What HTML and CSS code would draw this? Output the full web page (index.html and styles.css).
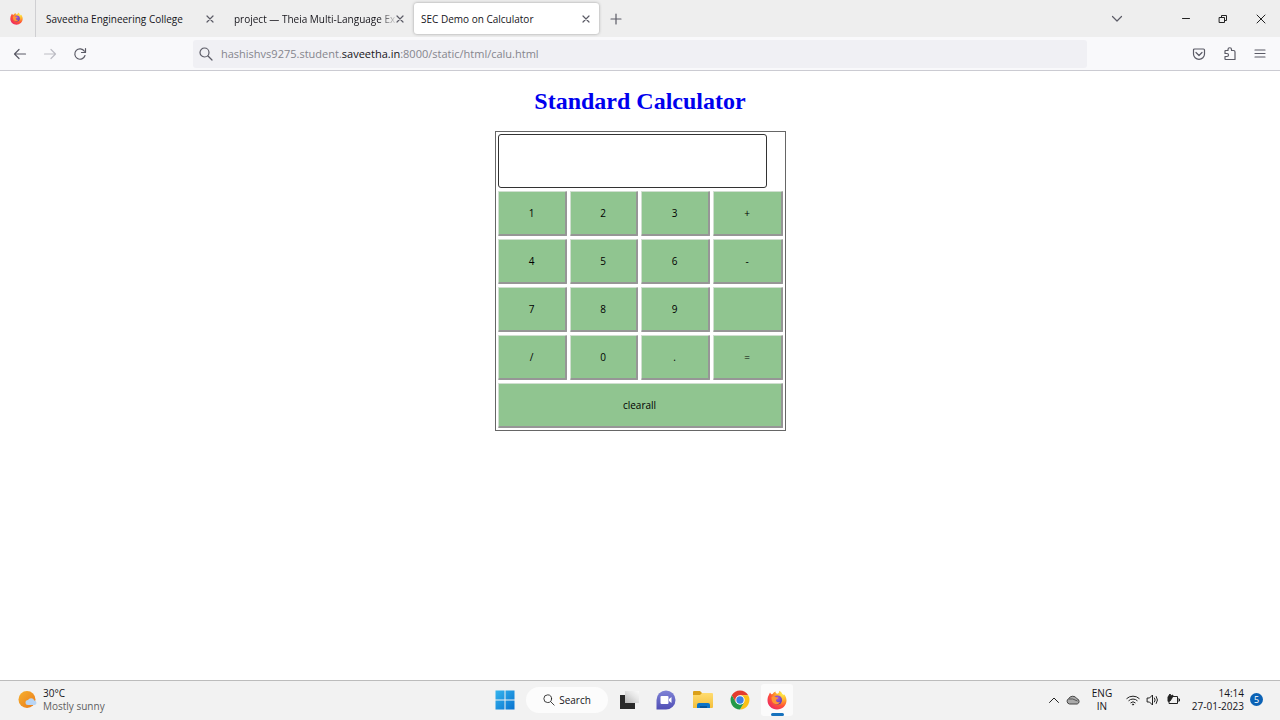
FILE: index.html
```html
<!DOCTYPE html>
<html lang="en">
<head>
<meta charset="utf-8">
<title>SEC Demo on Calculator</title>
<link rel="stylesheet" href="styles.css">
</head>
<body>
<svg class="defs" aria-hidden="true">
  <defs>
    <radialGradient id="fx" cx=".8" cy=".15" r="1"><stop offset="0" stop-color="#fff04a"/><stop offset=".35" stop-color="#ffad2b"/><stop offset=".65" stop-color="#ff5535"/><stop offset="1" stop-color="#ec2567"/></radialGradient>
    <radialGradient id="fxp" cx=".5" cy=".3" r=".8"><stop offset="0" stop-color="#a85ae0"/><stop offset="1" stop-color="#4d37a7"/></radialGradient>
    <linearGradient id="win" x1="0" y1="0" x2="1" y2="1"><stop offset="0" stop-color="#35b5ee"/><stop offset="1" stop-color="#0872cf"/></linearGradient>
    <linearGradient id="sun" x1="0" y1="0" x2="1" y2="1"><stop offset="0" stop-color="#f7b12d"/><stop offset="1" stop-color="#e9791b"/></linearGradient>
    <linearGradient id="chat" x1="0" y1="0" x2="0" y2="1"><stop offset="0" stop-color="#7f83d6"/><stop offset="1" stop-color="#504eb5"/></linearGradient>
    <linearGradient id="fold" x1="0" y1="0" x2="0" y2="1"><stop offset="0" stop-color="#ffdc70"/><stop offset="1" stop-color="#f4bf3b"/></linearGradient>
    <linearGradient id="glass" x1="0" y1="1" x2="1" y2="0"><stop offset="0" stop-color="#b5b5b5"/><stop offset=".6" stop-color="#e6e6e6"/><stop offset="1" stop-color="#fafafa"/></linearGradient>
    <symbol id="firefox" viewBox="0 0 20 20"><path fill="url(#fx)" d="M2.2 4.2 3 2.6l1.2 1.7 1.4-.2C6.300 2.800 7.200 2 8.500 1.500c-.1 1 .4 1.800 1.500 2.300 1.500-.1 2-.8 2.300-3C14 1.500 14.800 2.900 15.300 4c.8.5 1 .9 1.300 1.200.2-.5.2-.8.100-1.200C18.500 5.600 19.500 8 19.500 10.500 19.500 15.600 15.300 19.500 10 19.500S.5 15.500.5 10.300C.5 8 1.100 6 2.200 4.200z"/><circle cx="10.500" cy="10" r="4.600" fill="url(#fxp)"/><path fill="#ff9534" d="M4.500 7.200c2-1.500 3.500-.8 4.600.1l2 .3c.4.800-.6 1.300-1.600 1.700-.4.800-.7 1.300-.2 2 .8 1.200 2.300 1.200 3.700.4-1 2.700-4 3.300-6.100 1.900-1.600-1.100-2.600-3.600-2.400-6.400z"/></symbol>
    <symbol id="x" viewBox="0 0 10 10"><path d="m2 2 6 6m0-6-6 6"/></symbol>
    <symbol id="lens" viewBox="0 0 14 14"><circle cx="5.500" cy="5.500" r="4.500"/><path d="m9 9 4 4"/></symbol>
  </defs>
</svg>
<header class="tabs">
  <div class="pin"><svg class="i13"><use href="#firefox"/></svg></div>
  <div class="tab"><span class="tab-title">Saveetha Engineering College</span><button class="icon-btn" aria-label="Close tab"><svg class="line i10"><use href="#x"/></svg></button></div>
  <div class="tab"><span class="tab-title fade">project — Theia Multi-Language Ex</span><button class="icon-btn" aria-label="Close tab"><svg class="line i10"><use href="#x"/></svg></button></div>
  <div class="tab active"><span class="tab-title">SEC Demo on Calculator</span><button class="icon-btn" aria-label="Close tab"><svg class="line i10"><use href="#x"/></svg></button></div>
  <button class="icon-btn add" aria-label="New tab"><svg class="line i12" viewBox="0 0 12 12"><path d="M6 1v10M1 6h10"/></svg></button>
  <div class="window-controls">
    <button class="icon-btn list" aria-label="List all tabs"><svg class="line i12" viewBox="0 0 12 12"><path d="m1.500 3.500 4.500 4.500 4.500-4.500"/></svg></button>
    <button class="icon-btn" aria-label="Minimize"><svg class="line dark i10" viewBox="0 0 10 10"><path d="M1.500 4.500h7"/></svg></button>
    <button class="icon-btn" aria-label="Restore"><svg class="line dark i10" viewBox="0 0 10 10"><path d="M1.500 3.500h5v5h-5zM3.500 3V1.500h5v5H7"/></svg></button>
    <button class="icon-btn" aria-label="Close"><svg class="line dark i12" viewBox="0 0 12 12"><path d="m2 2 8 8m0-8-8 8"/></svg></button>
  </div>
</header>
<nav class="toolbar">
  <div class="nav-buttons">
    <button class="icon-btn" aria-label="Back"><svg class="line i14" viewBox="0 0 14 14"><path d="M12.500 7h-11M6 2.500 1.500 7 6 11.500"/></svg></button>
    <button class="icon-btn" aria-label="Forward" disabled><svg class="line pale i14" viewBox="0 0 14 14"><path d="M1.500 7h11M8 2.500l4.500 4.500L8 11.500"/></svg></button>
    <button class="icon-btn" aria-label="Reload"><svg class="line i14" viewBox="0 0 14 14"><path d="M12 8.500a5.200 5.200 0 1 1-.6-4.300M12.500 1.500v4h-4"/></svg></button>
  </div>
  <a class="address" href="#"><svg class="line i14"><use href="#lens"/></svg><span>hashishvs9275.student.<b>saveetha.in</b>:8000/static/html/calu.html</span></a>
  <div class="tools">
    <button class="icon-btn" aria-label="Pocket"><svg class="line i14" viewBox="0 0 14 14"><path d="M2.500 2h9q1 0 1 1v4a5.500 5.300 0 0 1-11 0V3q0-1 1-1zM4 5.500l3 3 3-3"/></svg></button>
    <button class="icon-btn" aria-label="Extensions"><svg class="line i14" viewBox="0 0 14 14"><path d="M2 5V4q0-.5.500-.5H5V2.500a1.500 1.500 0 0 1 3.500 0v1h2q1.500 0 1.500 1.500v7.500H2.500Q2 12.500 2 12V9.500h2a1.300 1.300 0 0 0 0-3H2z"/></svg></button>
    <button class="icon-btn" aria-label="Menu"><svg class="line i12" viewBox="0 0 12 12"><path d="M1 2h10M1 5.500h10M1 9h10"/></svg></button>
  </div>
</nav>
<main class="page">
  <h1>Standard Calculator</h1>
  <form class="calculator">
    <input class="display" type="text" aria-label="Result">
    <button type="button">1</button><button type="button">2</button><button type="button">3</button><button type="button">+</button>
    <button type="button">4</button><button type="button">5</button><button type="button">6</button><button type="button">-</button>
    <button type="button">7</button><button type="button">8</button><button type="button">9</button><button type="button" aria-label="Multiply"></button>
    <button type="button">/</button><button type="button">0</button><button type="button">.</button><button type="button">=</button>
    <button class="clear" type="button">clearall</button>
  </form>
</main>
<footer class="taskbar">
  <div class="weather">
    <svg class="i20" viewBox="0 0 20 20"><circle cx="9" cy="9.500" r="8.500" fill="url(#sun)"/><path fill="#b9d5f5" d="M10 15a2.500 2.500 0 0 1 0-5 3.500 3.500 0 0 1 6.300.4A2.400 2.400 0 0 1 17 15z"/></svg>
    <div><div>30°C</div><div class="muted">Mostly sunny</div></div>
  </div>
  <div class="apps">
    <button class="icon-btn" aria-label="Start"><svg class="i20" viewBox="0 0 20 20"><path fill="url(#win)" d="M.5.500h9v9h-9zM10.500.500h9v9h-9zM.5 10.500h9v9h-9zM10.500 10.500h9v9h-9z"/></svg></button>
    <button class="search"><svg class="line dark i12"><use href="#lens"/></svg>Search</button>
    <button class="icon-btn" aria-label="Task view"><svg class="i20" viewBox="0 0 20 20"><path fill="#292929" d="M1 5h15v14H1z"/><path fill="url(#glass)" d="M6 1h14v12H6z"/></svg></button>
    <button class="icon-btn" aria-label="Chat"><svg class="i20" viewBox="0 0 20 20"><path fill="url(#chat)" d="M.5 19.500V10a9.500 9.500 0 1 1 9.500 9.500z"/><rect x="4.500" y="6" width="8" height="8" rx="1" fill="#fff"/><path fill="#fff" d="m13 9 2.500-2v6L13 11z"/></svg></button>
    <button class="icon-btn" aria-label="File Explorer"><svg class="i20" viewBox="0 0 20 20"><path fill="#dba019" d="M0 2q0-1 1-1h6l2 2v4H0z"/><path fill="url(#fold)" d="M0 5h7l2-2h10q1 0 1 1v13q0 1-1 1H0z"/><path fill="#0b73c8" d="M4 18v-3q0-2 2-2h9q2 0 2 2v3z"/><path fill="#07549a" d="M7 16h7v2H7z"/></svg></button>
    <button class="icon-btn" aria-label="Chrome"><svg class="i20" viewBox="0 0 20 20"><path fill="#e43c2e" d="M1.800 5.300A9.500 9.500 0 0 1 18.200 5.300H10L5.900 12.400z"/><path fill="#fbc116" d="M18.200 5.300A9.500 9.500 0 0 1 10 19.500l4.100-7.100L10 5.300z"/><path fill="#249a4a" d="M10 19.500A9.500 9.500 0 0 1 1.800 5.300l4.100 7.100h8.200z"/><circle cx="10" cy="10" r="4.700" fill="#fff"/><circle cx="10" cy="10" r="3.700" fill="#3b7fe5"/></svg></button>
    <button class="icon-btn current" aria-label="Firefox"><svg class="i20"><use href="#firefox"/></svg></button>
  </div>
  <div class="tray">
    <svg class="line dark i12" viewBox="0 0 12 12"><path d="M1.500 8.500 6 4l4.500 4.500"/></svg>
    <svg class="i14 cloud" viewBox="0 0 14 14"><path fill="#aaa" stroke="#444" d="M3.500 11a2.800 2.800 0 0 1-1-5.200 4.800 4.800 0 0 1 8.500 0 2.700 2.700 0 0 1 .2 5.200z"/><path stroke="#555" fill="none" d="M2.500 6q4-1 9 2"/></svg>
    <div class="lang">ENG<br>IN</div>
    <div class="status">
    <svg class="line dark i14" viewBox="0 0 14 14"><path d="M.8 5.500a9 9 0 0 1 12.400 0M2.800 7.600a6 6 0 0 1 8.400 0M4.800 9.700a3.200 3.200 0 0 1 4.400 0"/><circle cx="7" cy="11.500" r=".6"/></svg>
    <svg class="line dark i14" viewBox="0 0 14 14"><path d="M1.500 5h2l3-3v10l-3-3h-2zM8.500 5q1.500 2 0 4M10.300 3.500q2.500 3.500 0 7"/></svg>
    <svg class="line dark i14" viewBox="0 0 14 14"><path d="M6 3.500h5.500v7H3V9M12 6h1.500v2H12"/><path fill="#222" d="M2 8V4l2-3 1 2 2-1-1 3-2 3z"/></svg>
    </div>
    <div class="clock">14:14<br>27-01-2023</div>
    <span class="badge">5</span>
  </div>
</footer>
</body>
</html>
```
FILE: styles.css
```css
* { box-sizing: border-box; }
body {
  margin: 0;
  min-height: 100vh;
  display: flex;
  flex-direction: column;
  background: #fff;
  color: #15141a;
  font: 10px/14px "Open Sans", "Noto Sans", sans-serif;
}
button { font: inherit; color: inherit; }
svg { display: block; flex: none; }
.defs { width: 0; height: 0; position: absolute; }
.line { fill: none; stroke: #5b5b66; stroke-width: 1.2; stroke-linecap: round; stroke-linejoin: round; }
.dark { stroke: #222; stroke-width: 1; }
.pale { stroke: #bdbdc4; }
.i10 { width: 10px; height: 10px; }
.i12 { width: 12px; height: 12px; }
.i13 { width: 13px; height: 13px; }
.i14 { width: 14px; height: 14px; }
.i20 { width: 20px; height: 20px; }
.icon-btn { display: flex; align-items: center; justify-content: center; padding: 0; border: 0; background: none; }

.tabs { display: flex; align-items: center; height: 37px; background: #eee; }
.pin { display: flex; align-items: center; align-self: stretch; width: 36px; padding-left: 10px; border-right: 1px solid #cfcfd2; }
.tab { display: flex; align-items: center; justify-content: space-between; width: 188px; padding: 0 9px 0 10px; height: 31px; }
.tab-title { white-space: nowrap; }
.fade { background: linear-gradient(90deg, #15141a 90%, #ccc); -webkit-background-clip: text; background-clip: text; color: transparent; }
.active { width: 185px; margin-left: 2px; padding: 0 8px 0 7px; border-radius: 3px; background: #fff; box-shadow: 0 0 3px #999; }
.add { margin-left: 11px; }
.window-controls { display: flex; align-items: center; gap: 27px; margin-left: auto; padding-right: 13px; }
.list { margin-right: 31px; }

.toolbar { display: flex; align-items: center; height: 34px; border-bottom: 1px solid #cbcbd2; background: #f9f9fb; }
.nav-buttons { display: flex; gap: 16px; width: 193px; padding-left: 13px; }
.address { display: flex; align-items: center; gap: 8px; flex: 1; height: 28px; padding: 0 6px; border-radius: 3px; background: #f0f0f4; color: #85858d; font-size: 11px; text-decoration: none; }
.address b { color: #15141a; font-weight: 400; }
.tools { display: flex; align-items: center; justify-content: flex-end; gap: 17px; width: 193px; padding-right: 14px; }

.page { flex: 1; display: flex; flex-direction: column; align-items: center; padding-top: 16px; }
h1 { margin: 0 0 16px; color: #00e; font: bold 24px/28px "Liberation Serif", serif; }
.calculator { display: grid; grid-template-columns: 69px 68px 69px 70px; grid-template-rows: 54px; grid-auto-rows: 45px; gap: 3px; padding: 2px; border: 1px solid #666; }
.display { grid-column: 1 / -1; width: 269px; height: 54px; border: 1px solid #333; border-radius: 3px; background: #fff; }
.calculator button { padding: 0; border: 2px solid; border-width: 1px 2px 2px 1px; border-color: #d0dfd0 #969696 #969696 #d0dfd0; border-radius: 1px; background: #90c590; color: #000; }
.calculator .clear { grid-column: 1 / -1; }

.taskbar { display: grid; grid-template-columns: 1fr auto 1fr; align-items: center; height: 40px; padding-bottom: 2px; border-top: 1px solid #bcbcbc; background: #f2f2f2; }
.weather { display: flex; align-items: center; gap: 5px; padding-left: 18px; line-height: 13px; }
.muted { color: #606060; }
.apps { display: flex; align-items: center; gap: 17px; padding-left: 8px; }
.search { display: flex; align-items: center; justify-content: center; gap: 4px; width: 82px; height: 26px; margin: 0 -6px; border: 0; border-radius: 13px; background: #fcfcfc; }
.current { width: 32px; height: 32px; margin-left: -6px; border-radius: 3px; background: #fbfbfb; position: relative; }
.current::after { content: ""; position: absolute; left: 10px; bottom: 0; width: 13px; height: 3px; border-radius: 2px; background: #1672bd; }
.tray { display: flex; align-items: center; justify-content: flex-end; padding-right: 17px; line-height: 13px; }
.cloud { margin-left: 6px; }
.lang { width: 44px; text-align: center; }
.status { display: flex; gap: 6px; padding-left: 2px; }
.clock { width: 64px; text-align: right; }
.badge { width: 13px; height: 13px; margin-left: 6px; border-radius: 50%; background: #0b62b5; color: #fff; font-size: 9px; text-align: center; }
```
